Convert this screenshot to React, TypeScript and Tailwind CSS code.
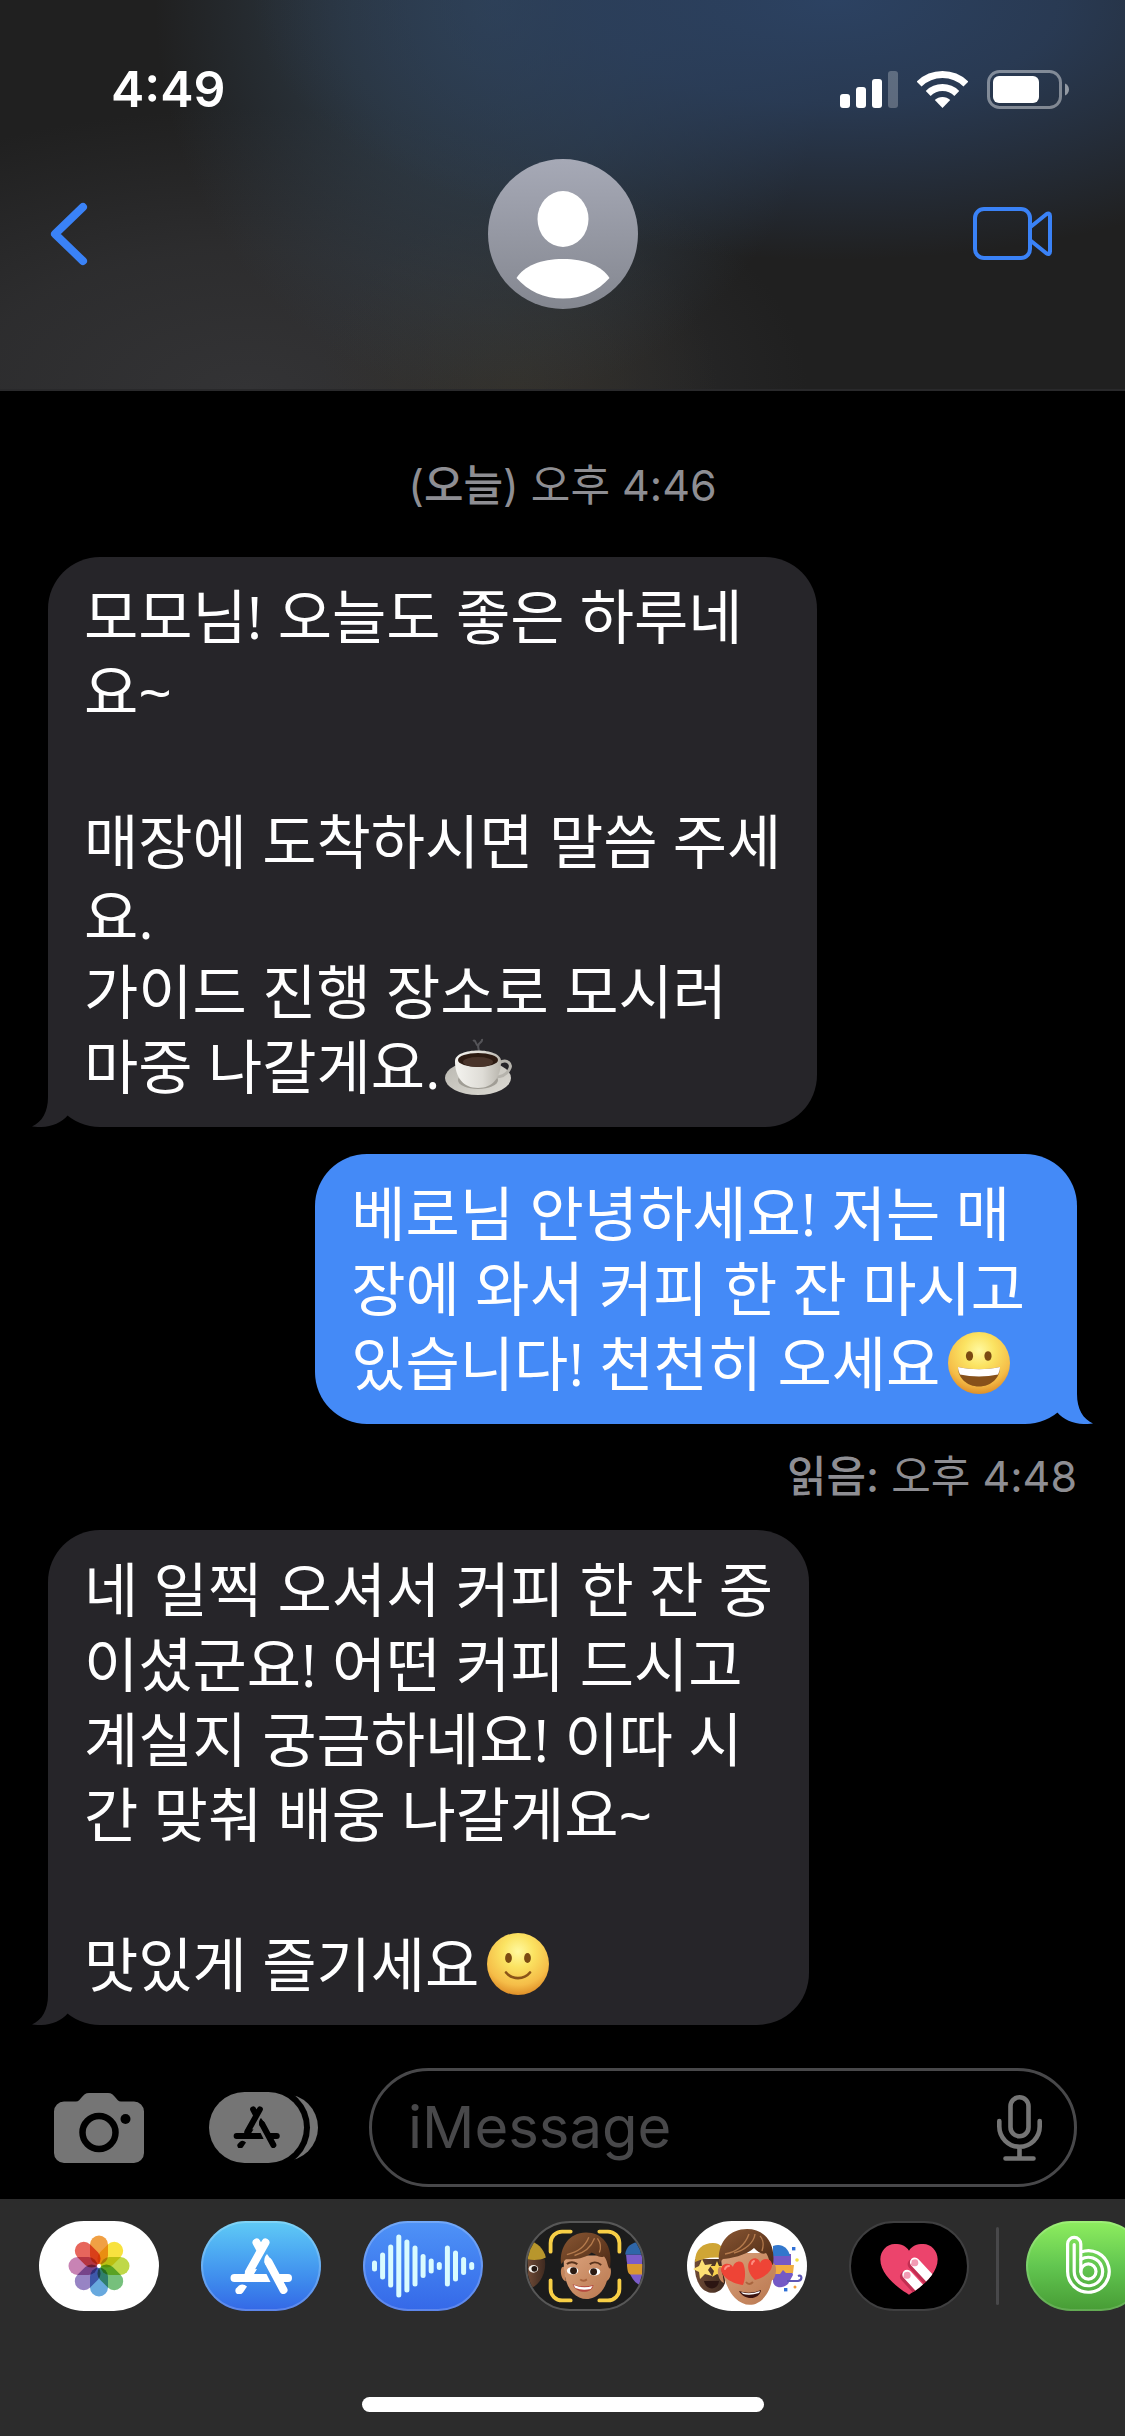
import type { ReactNode } from "react";

type Message = {
  id: number;
  sent?: boolean;
  text: string;
  emoji: ReactNode;
  read?: string;
};

/* ---------- Status bar icons ---------- */

function SignalIcon() {
  return (
    <svg width="58" height="37" viewBox="0 0 58 37" fill="#fff" aria-hidden="true">
      <rect x="0" y="23" width="10" height="14" rx="3" />
      <rect x="16" y="16" width="10" height="21" rx="3" />
      <rect x="32" y="8" width="10" height="29" rx="3" />
      <rect x="48" y="0" width="10" height="37" rx="3" opacity="0.25" />
    </svg>
  );
}

function WifiIcon() {
  return (
    <svg width="51" height="37" viewBox="0 0 51 37" fill="none" stroke="#fff" strokeWidth="7" aria-hidden="true">
      <path d="M2.1 13.1A33.5 33.5 0 0 1 48.9 13.1" />
      <path d="M11.2 22.4A20.5 20.5 0 0 1 39.8 22.4" />
      <path d="M17.8 29.1A11 11 0 0 1 33.2 29.1L25.5 37Z" fill="#fff" stroke="none" />
    </svg>
  );
}

function BatteryIcon() {
  return (
    <svg width="82" height="39" viewBox="0 0 82 39" fill="none" aria-hidden="true">
      <rect x="1.5" y="1.5" width="72" height="36" rx="11" stroke="#fff" strokeOpacity="0.42" strokeWidth="3" />
      <rect x="6" y="6" width="46" height="27" rx="6" fill="#fff" />
      <path d="M78 13.5C80.6 14.6 82 17 82 19.5S80.6 24.4 78 25.5Z" fill="#fff" fillOpacity="0.5" />
    </svg>
  );
}

/* ---------- Emoji ---------- */

function FaceGradient({ id }: { id: string }) {
  return (
    <defs>
      <radialGradient id={id} cx="0.5" cy="0.3" r="0.72">
        <stop offset="0" stopColor="#fff9a0" />
        <stop offset="0.35" stopColor="#fbe362" />
        <stop offset="0.75" stopColor="#f5bd48" />
        <stop offset="1" stopColor="#dd8a25" />
      </radialGradient>
    </defs>
  );
}

function GrinEmoji() {
  return (
    <svg className="inline-block ml-2 align-[-8px]" width="62" height="62" viewBox="0 0 62 62" role="img" aria-label="😀">
      <FaceGradient id="grin" />
      <circle cx="31" cy="31" r="31" fill="url(#grin)" />
      <ellipse cx="21.5" cy="24" rx="3.6" ry="4.8" fill="#7a4a12" />
      <ellipse cx="40" cy="24" rx="3.6" ry="4.8" fill="#7a4a12" />
      <path d="M10 35C24 38 38 38 52 35C52 46 43 54.5 31 54.5S10 46 10 35Z" fill="#87511a" />
      <path d="M10 35C24 38 38 38 52 35C52 38 51 40 50 42.5C38 45 24 45 12 42.5C11 40 10 38 10 35Z" fill="#fff" />
    </svg>
  );
}

function SmileEmoji() {
  return (
    <svg className="inline-block ml-2 align-[-8px]" width="62" height="62" viewBox="0 0 62 62" role="img" aria-label="🙂">
      <FaceGradient id="smile" />
      <circle cx="31" cy="31" r="31" fill="url(#smile)" />
      <ellipse cx="21.5" cy="25" rx="3.4" ry="5" fill="#7a4a12" />
      <ellipse cx="40.5" cy="25" rx="3.4" ry="5" fill="#7a4a12" />
      <path d="M19 39.5C25 47 37 47 43 39.5" fill="none" stroke="#8a5318" strokeWidth="2.6" strokeLinecap="round" />
    </svg>
  );
}

function CoffeeEmoji() {
  return (
    <svg className="inline-block ml-1 align-[-8px]" width="68" height="60" viewBox="0 0 68 60" role="img" aria-label="☕">
      <defs>
        <linearGradient id="cup" x1="0" x2="1">
          <stop offset="0" stopColor="#f4f3ef" />
          <stop offset="0.6" stopColor="#dedcd6" />
          <stop offset="1" stopColor="#b9b6ae" />
        </linearGradient>
        <linearGradient id="saucer" x1="0" x2="1" y2="1">
          <stop offset="0" stopColor="#b9b7b0" />
          <stop offset="1" stopColor="#dddbd4" />
        </linearGradient>
      </defs>
      <path d="M28 4C31 2 30 7 33 9C33 5 38 6 37 2M33 17C36 13 31 10 34 7" fill="none" stroke="#8d8d92" strokeOpacity="0.45" strokeWidth="2" />
      <ellipse cx="33" cy="41" rx="33" ry="17" fill="url(#saucer)" />
      <ellipse cx="33" cy="43" rx="20" ry="9" fill="#a09d95" />
      <path d="M54 26C62 21 68 27 64 33C61 38 55 40 50 40" fill="none" stroke="#b5b3ac" strokeWidth="3" />
      <path d="M10 24C10 10 56 10 56 24C56 40 48 51 33 51S10 40 10 24Z" fill="url(#cup)" />
      <ellipse cx="33" cy="23" rx="20" ry="7" fill="#2d1b12" />
      <ellipse cx="33" cy="25" rx="15" ry="5" fill="#49342a" />
    </svg>
  );
}

/* ---------- Glyphs ---------- */

function AppStoreGlyph({ className }: { className?: string }) {
  return (
    <svg className={className} viewBox="29 15 62 56" fill="currentColor" aria-hidden="true">
      <g fill="none" stroke="currentColor" strokeWidth="8" strokeLinecap="round">
        <path d="M64.5 19.5L48 49M55.5 19.5L59 26M67.5 39L82.5 67" />
        <path d="M78 55H87" />
      </g>
      <path d="M33.5 51H65.5L69.5 59H33.5A4 4 0 0 1 33.5 51ZM45 47L43.5 51H53L56 46Z" />
      <path d="M66 31C62.5 35 63 38 64.5 42L71 38Z" />
      <path d="M38 62.5Q42 60 46 63.5L42 69.5Q39 73 35.5 70.5Q33.5 68 35 65.5Z" />
    </svg>
  );
}

function CameraIcon() {
  return (
    <svg width="90" height="70" viewBox="0 0 90 70" aria-hidden="true">
      <path
        d="M10 8.5H22C27 8.5 28 0 35 0H54C61 0 62 8.5 67 8.5H80A10 10 0 0 1 90 18.5V60A10 10 0 0 1 80 70H10A10 10 0 0 1 0 60V18.5A10 10 0 0 1 10 8.5Z"
        fill="#757575"
      />
      <circle cx="45" cy="39.5" r="16.5" fill="none" stroke="#000" strokeWidth="6.5" />
      <circle cx="71.5" cy="26" r="5" fill="#000" />
    </svg>
  );
}

function MicIcon() {
  return (
    <svg width="45" height="66" viewBox="0 0 45 66" fill="none" stroke="#757575" strokeWidth="4.6" strokeLinecap="round" aria-hidden="true">
      <rect x="13.5" y="2.3" width="18" height="39" rx="9" />
      <path d="M2.3 26V31.5A20.2 20.2 0 0 0 42.7 31.5V26M22.5 52V63M8.5 63.5H36.5" />
    </svg>
  );
}

/* ---------- App drawer ---------- */

const petals = ["#f0a044", "#f8e23f", "#bfd848", "#76c07c", "#68a9de", "#9784c4", "#c883b4", "#e7665c"];

function PhotosArt() {
  return (
    <svg className="size-full isolate" viewBox="0 0 120 90" aria-hidden="true">
      {petals.map((color, i) => (
        <rect
          key={color}
          className="mix-blend-multiply"
          x="51"
          y="14.5"
          width="18"
          height="29"
          rx="9"
          fill={color}
          transform={`rotate(${i * 45} 60 45)`}
        />
      ))}
      <circle cx="60" cy="45" r="2" fill="#fff" />
    </svg>
  );
}

const waveBars = [11, 27, 43, 63, 53, 41, 24, 15, 8, 41, 31, 18, 8];

function AudioArt() {
  return (
    <svg className="size-full" viewBox="0 0 120 90" aria-hidden="true">
      {waveBars.map((height, i) => (
        <rect key={i} x={9 + i * 8.1} y={45 - height / 2} width="5" height={height} rx="2.5" fill="#d9fbff" />
      ))}
    </svg>
  );
}

function SkinDefs({ id }: { id: string }) {
  return (
    <defs>
      <linearGradient id={`${id}-skin`} x1="0" x2="1" y2="1">
        <stop offset="0" stopColor="#dba27c" />
        <stop offset="1" stopColor="#b97850" />
      </linearGradient>
      <linearGradient id={`${id}-hair`} x1="0" x2="1" y2="1">
        <stop offset="0" stopColor="#8a5733" />
        <stop offset="1" stopColor="#4b2915" />
      </linearGradient>
      <linearGradient id={`${id}-dark`} x1="0" x2="1">
        <stop offset="0" stopColor="#6e4a36" />
        <stop offset="1" stopColor="#3f2a20" />
      </linearGradient>
    </defs>
  );
}

function MemojiArt() {
  return (
    <svg className="size-full" viewBox="0 0 120 90" aria-hidden="true">
      <SkinDefs id="mj" />
      {/* neighbour on the left */}
      <path d="M0 38H18C20 52 13 64 4 68L0 66Z" fill="url(#mj-dark)" />
      <ellipse cx="6" cy="48" rx="5" ry="4" fill="#f4f1ec" />
      <circle cx="7" cy="48" r="3" fill="#241811" />
      <path d="M0 18C10 20 17 27 19 36C13 39 6 39 0 38Z" fill="#b8962c" />
      {/* neighbour on the right */}
      <path d="M103 33H120V66C109 63 104 50 103 33Z" fill="#7b5cc9" />
      <path d="M102 33C103 24 110 19 120 20V33Z" fill="#2f66a8" />
      <path d="M104 43H120V54H108C105 54 104 49 104 43Z" fill="#d9982f" />
      {/* face */}
      <path d="M38 46C33 44 34 60 40 61ZM84 46C89 44 88 60 82 61Z" fill="#c5865d" />
      <path d="M38 34H85C86 50 84 64 77 72C68 82 56 82 47 73C39 64 37 50 38 34Z" fill="url(#mj-skin)" />
      <path d="M35 43C33 26 43 10 61 10C78 10 90 23 86 48C83 45 84 40 80 35C74 37 72 33 67 31C58 39 45 38 40 38Z" fill="url(#mj-hair)" />
      <path d="M41 33C51 31 60 25 64 15M49 34C60 31 67 24 70 16M75 31C77 26 76 20 73 16" fill="none" stroke="#b47a4c" strokeWidth="1.4" />
      <path d="M41 43Q46 39 52 43M65 43Q71 39 77 44" fill="none" stroke="#5a341d" strokeWidth="2" />
      <ellipse cx="47" cy="50" rx="6" ry="4" fill="#fff" />
      <ellipse cx="70" cy="51" rx="6" ry="4" fill="#fff" />
      <circle cx="48" cy="50" r="3.6" fill="#2b1a12" />
      <circle cx="69" cy="51" r="3.6" fill="#2b1a12" />
      <path d="M55 59Q58 62 62 59" fill="none" stroke="#a8653f" strokeWidth="2" />
      <path d="M47 64Q58 68 69 65C67 75 50 74 47 64Z" fill="#b5483f" />
      <path d="M48 65Q58 69 68 66L66 69Q57 71 50 68Z" fill="#fff" />
      {/* viewfinder */}
      <path
        d="M24 30V21A12 12 0 0 1 36 9H45M75 9H84A12 12 0 0 1 96 21V30M96 60V69A12 12 0 0 1 84 81H75M45 81H36A12 12 0 0 1 24 69V60"
        fill="none"
        stroke="#f8cf46"
        strokeWidth="4"
        strokeLinecap="round"
      />
    </svg>
  );
}

function StickerArt() {
  return (
    <svg className="size-full" viewBox="0 0 120 90" aria-hidden="true">
      <SkinDefs id="st" />
      {/* star-struck friend */}
      <path d="M8 38H38V62C34 74 20 75 13 65C8 57 7 48 8 38Z" fill="url(#st-dark)" />
      <path d="M8 41C8 28 16 22 26 22C34 22 38 28 38 38C28 35 17 37 8 41Z" fill="#cfa535" />
      <path d="M15 38L18 44L25 43L21 49L25 55L18 53L13 58L12 51L6 48L12 45Z" fill="#fde074" />
      <path d="M30 40L32 45L38 45L34 50L36 56L30 53L25 56L27 50L23 45L28 45Z" fill="#f9d14f" />
      <path d="M17 60H32C31 70 19 70 17 60Z" fill="#2c1512" />
      {/* party friend */}
      <path d="M86 33H104V45L106 54L101 63C94 69 86 66 86 60Z" fill="#7459c6" />
      <path d="M86 25C94 22 101 26 103 35H86Z" fill="#3277cc" />
      <path d="M86 44H107L106 52H99L96 49L93 53H86Z" fill="#f0ad42" />
      <path d="M100 60H111C116 59 115 53 111 55" fill="none" stroke="#5d55b5" strokeWidth="2.2" />
      <rect x="105" y="26" width="3.4" height="3.4" fill="#2e6fd6" />
      <rect x="97" y="67" width="3.4" height="3.4" fill="#2e6fd6" />
      <circle cx="110" cy="39" r="1.8" fill="#f5df3c" />
      <circle cx="108" cy="66" r="1.5" fill="#f0993a" />
      {/* face */}
      <path d="M34 46C29 44 30 60 37 62ZM85 42C91 41 90 58 84 60Z" fill="#c5865d" />
      <path d="M34 32H85C87 50 86 64 79 74C71 86 58 87 48 77C39 68 34 50 34 32Z" fill="url(#st-skin)" />
      <path d="M32 42C30 22 42 8 60 8C78 8 89 22 86 44C82 42 82 36 79 32C75 34 71 31 67 27C60 34 42 38 36 38Z" fill="url(#st-hair)" />
      <path d="M38 33C50 31 58 24 62 13M47 32C58 29 67 22 68 13M75 30C77 24 76 18 73 15" fill="none" stroke="#b47a4c" strokeWidth="1.4" />
      <path d="M52 70Q63 74 74 69C73 79 57 80 52 70Z" fill="#3a120f" />
      <path d="M54 71Q63 74 73 70L72 72Q63 75 56 73Z" fill="#fff" />
      <path d="M59 61Q62 65 66 61" fill="none" stroke="#a8653f" strokeWidth="2" />
      <path d="M56 64C46 63 34 56 34 48C35 42 43 41 46 46C47 40 56 38 57 45C59 52 58 59 56 64Z" fill="#ee4436" />
      <path d="M68 59C60 52 59 41 65 38C69 36 73 39 73 42C76 36 84 37 85 43C86 50 77 57 68 59Z" fill="#ee4436" />
      <path d="M38 48Q39 45 42 45M65 43Q65 41 67 40" fill="none" stroke="#ff8d80" strokeWidth="2" strokeLinecap="round" />
    </svg>
  );
}

function HeartArt() {
  const heart = "M60 75C52 70 30 56 30 38C30 29 37 22 45 22C52 22 57 24 60 29C63 24 68 22 75 22C83 22 90 29 90 38C90 56 68 70 60 75Z";
  return (
    <svg className="size-full" viewBox="0 0 120 90" aria-hidden="true">
      <clipPath id="heart-clip">
        <path d={heart} />
      </clipPath>
      <path d={heart} fill="#ec446c" />
      <g clipPath="url(#heart-clip)" strokeLinecap="round" fill="none">
        <path d="M64 43L90 71M56 56L82 84" stroke="#c22e52" strokeWidth="11" />
        <path d="M66 41L92 69M58 54L84 82" stroke="#fff" strokeWidth="10" />
      </g>
      <path d="M63 39Q67 37 69 39Q71 43 68 45Q64 46 62 44ZM55 52Q59 50 61 52Q63 56 60 58Q56 59 54 57Z" fill="#f29bb4" />
    </svg>
  );
}

function BandArt() {
  return (
    <svg className="size-full" viewBox="0 0 120 90" fill="none" stroke="#fff" strokeWidth="3.2" strokeLinecap="round" aria-hidden="true">
      <path d="M54.8 50.5V23A6.6 6.6 0 0 0 41.6 23V50.5A20.8 20.8 0 1 0 55 31" />
      <path d="M48.2 23.5V50.5A14.2 14.2 0 1 0 55 38.4" />
      <circle cx="62.4" cy="50.5" r="7.6" />
    </svg>
  );
}

const apps = [
  { name: "사진", art: <PhotosArt />, skin: "bg-white" },
  {
    name: "App Store",
    art: <AppStoreGlyph className="h-14 w-[62px] text-white" />,
    skin: "bg-linear-to-b from-[#60cbf6] to-[#3467e6] inset-ring-2 inset-ring-white/20",
  },
  { name: "오디오", art: <AudioArt />, skin: "bg-linear-to-b from-[#4f93f7] to-[#3568e8] inset-ring-2 inset-ring-white/20" },
  { name: "미모티콘", art: <MemojiArt />, skin: "bg-[#1c1c1c] border-2 border-[#575757]" },
  { name: "미모티콘 스티커", art: <StickerArt />, skin: "bg-white" },
  { name: "Digital Touch", art: <HeartArt />, skin: "bg-black border-2 border-[#3f3f40]" },
];

function AppButton({ name, art, skin }: { name: string; art: ReactNode; skin: string }) {
  return (
    <button
      aria-label={name}
      className={`flex h-[90px] w-[120px] shrink-0 items-center justify-center overflow-hidden rounded-full ${skin}`}
    >
      {art}
    </button>
  );
}

/* ---------- Conversation ---------- */

const messages: Message[] = [
  {
    id: 1,
    text: "모모님! 오늘도 좋은 하루네\n요~\n\n매장에 도착하시면 말씀 주세\n요.\n가이드 진행 장소로 모시러\n마중 나갈게요.",
    emoji: <CoffeeEmoji />,
  },
  {
    id: 2,
    sent: true,
    text: "베로님 안녕하세요! 저는 매\n장에 와서 커피 한 잔 마시고\n있습니다! 천천히 오세요",
    emoji: <GrinEmoji />,
    read: "오후 4:48",
  },
  {
    id: 3,
    text: "네 일찍 오셔서 커피 한 잔 중\n이셨군요! 어떤 커피 드시고\n계실지 궁금하네요! 이따 시\n간 맞춰 배웅 나갈게요~\n\n맛있게 즐기세요",
    emoji: <SmileEmoji />,
  },
];

function Bubble({ message }: { message: Message }) {
  const { sent, text, emoji } = message;
  return (
    <div
      className={`relative w-fit rounded-[52px] pt-[22px] pb-[23px] pl-9 font-['Open_Sans','Noto_Sans_CJK_KR',sans-serif] text-[59px] leading-[75px] whitespace-pre text-white ${
        sent ? "self-end bg-[#448af7] pr-[52px]" : "self-start bg-[#262529] pr-9"
      }`}
    >
      {text}
      {emoji}
      <svg
        className={`absolute bottom-0 h-[52px] w-9 ${sent ? "-right-4 -scale-x-100 text-[#448af7]" : "-left-4 text-[#262529]"}`}
        viewBox="0 0 36 52"
        fill="currentColor"
        aria-hidden="true"
      >
        <path d="M16 0V22C16 37 10 47 0 51.5C14 53.5 28 50 36 40V0Z" />
      </svg>
    </div>
  );
}

export default function App() {
  return (
    <div
      lang="ko"
      className="flex min-h-screen flex-col overflow-hidden bg-black font-['Inter','Noto_Sans_CJK_KR',sans-serif] text-white"
    >
      <header className="border-b-2 border-[#29292b] bg-[#202020] bg-[radial-gradient(ellipse_580px_260px_at_74%_0%,#2c4262_0%,#2b405fcc_40%,#2b405f00_100%),radial-gradient(ellipse_340px_400px_at_44%_0%,#34485bcc_0%,#34485b88_45%,#34485b00_100%),radial-gradient(ellipse_200px_180px_at_46%_100%,#35322bcc_0%,#35322b00_100%),radial-gradient(ellipse_560px_280px_at_22%_100%,#333335_0%,#333335aa_50%,#33333500_100%)]">
        <div className="flex items-center justify-between pt-[53px] pr-14 pl-[111px]">
          <span className="text-[50px] leading-[72px] font-semibold">4:49</span>
          <div className="flex items-center gap-[19px]">
            <SignalIcon />
            <WifiIcon />
            <BatteryIcon />
          </div>
        </div>
        <div className="mt-[34px] mb-20 grid grid-cols-3 items-center pr-[72px] pl-[50px]">
          <button aria-label="뒤로" className="justify-self-start">
            <svg width="38" height="64" viewBox="0 0 38 64" fill="none" stroke="#3a82f7" strokeWidth="8" strokeLinecap="round" strokeLinejoin="round">
              <path d="M33 5L5 32L33 59" />
            </svg>
          </button>
          <button aria-label="연락처" className="ml-6 justify-self-center">
            <svg width="150" height="150" viewBox="0 0 150 150">
              <defs>
                <linearGradient id="avatar" x2="0" y2="1">
                  <stop offset="0" stopColor="#a6a9b6" />
                  <stop offset="1" stopColor="#848790" />
                </linearGradient>
              </defs>
              <circle cx="75" cy="75" r="75" fill="url(#avatar)" />
              <ellipse cx="75" cy="60" rx="25.5" ry="28" fill="#fff" />
              <path d="M28.5 119C36 107 53 100 75 100S114 107 121.5 119C110 132 94 139.5 75 139.5S40 132 28.5 119Z" fill="#fff" />
            </svg>
          </button>
          <button aria-label="영상 통화" className="justify-self-end">
            <svg width="80" height="54" viewBox="0 0 80 54" fill="none" stroke="#3a82f7" strokeWidth="4" strokeLinejoin="round">
              <rect x="2" y="2" width="55" height="49" rx="9" />
              <path d="M57.5 20L73 7.5Q77 5 77 9V44.5Q77 48.5 73 46L57.5 33.5" />
            </svg>
          </button>
        </div>
      </header>

      <main className="flex grow flex-col px-12">
        <p className="mt-[67px] mb-[45px] text-center text-[43px] leading-[54px] text-[#8e8e93]">
          (<span className="font-medium">오늘</span>) 오후 4:46
        </p>
        <div className="flex flex-col gap-[27px]">
          {messages.map((message) => (
            <div key={message.id} className="flex flex-col">
              <Bubble message={message} />
              {message.read && (
                <p className="mt-[25px] self-end text-[43px] leading-[54px] text-[#8e8e93]">
                  <span className="font-medium">읽음:</span> {message.read}
                </p>
              )}
            </div>
          ))}
        </div>
      </main>

      <form className="flex items-center pr-12 pb-3 pl-[54px]" onSubmit={(e) => e.preventDefault()}>
        <button type="button" aria-label="카메라" className="shrink-0">
          <CameraIcon />
        </button>
        <button type="button" aria-label="앱" className="relative ml-[65px] shrink-0">
          <svg width="109" height="71" viewBox="0 0 109 71" aria-hidden="true">
            <rect x="24" y="2" width="85" height="67" rx="33.5" fill="#757575" />
            <rect x="0" y="-6" width="101" height="83" rx="41.5" fill="#000" />
            <rect width="95" height="71" rx="35.5" fill="#757575" />
          </svg>
          <AppStoreGlyph className="absolute top-3.5 left-6 h-[42px] w-[47px] text-black" />
        </button>
        <div className="ml-[51px] flex h-[119px] min-w-0 grow items-center rounded-full border-3 border-[#48484a] pr-8 pl-9">
          <input
            type="text"
            aria-label="iMessage"
            placeholder="iMessage"
            className="w-0 min-w-0 grow bg-transparent text-[58px] leading-[75px] outline-none placeholder:text-[#48484a]"
          />
          <button type="button" aria-label="받아쓰기" className="shrink-0">
            <MicIcon />
          </button>
        </div>
      </form>

      <footer className="bg-[#2c2c2c] pt-[22px] pb-6">
        <div className="flex items-center gap-[42px] overflow-hidden pl-[39px]">
          {apps.map((app) => (
            <AppButton key={app.name} {...app} />
          ))}
          <div className="-mx-[15px] h-[78px] w-[3px] shrink-0 rounded-full bg-[#48484a]" />
          <AppButton
            name="BAND"
            art={<BandArt />}
            skin="bg-linear-to-b from-[#8eee5f] via-[#62c650] to-[#479c35] inset-ring-2 inset-ring-white/15"
          />
        </div>
        <div className="mx-auto mt-[86px] h-[15px] w-[402px] rounded-full bg-white" />
      </footer>
    </div>
  );
}
